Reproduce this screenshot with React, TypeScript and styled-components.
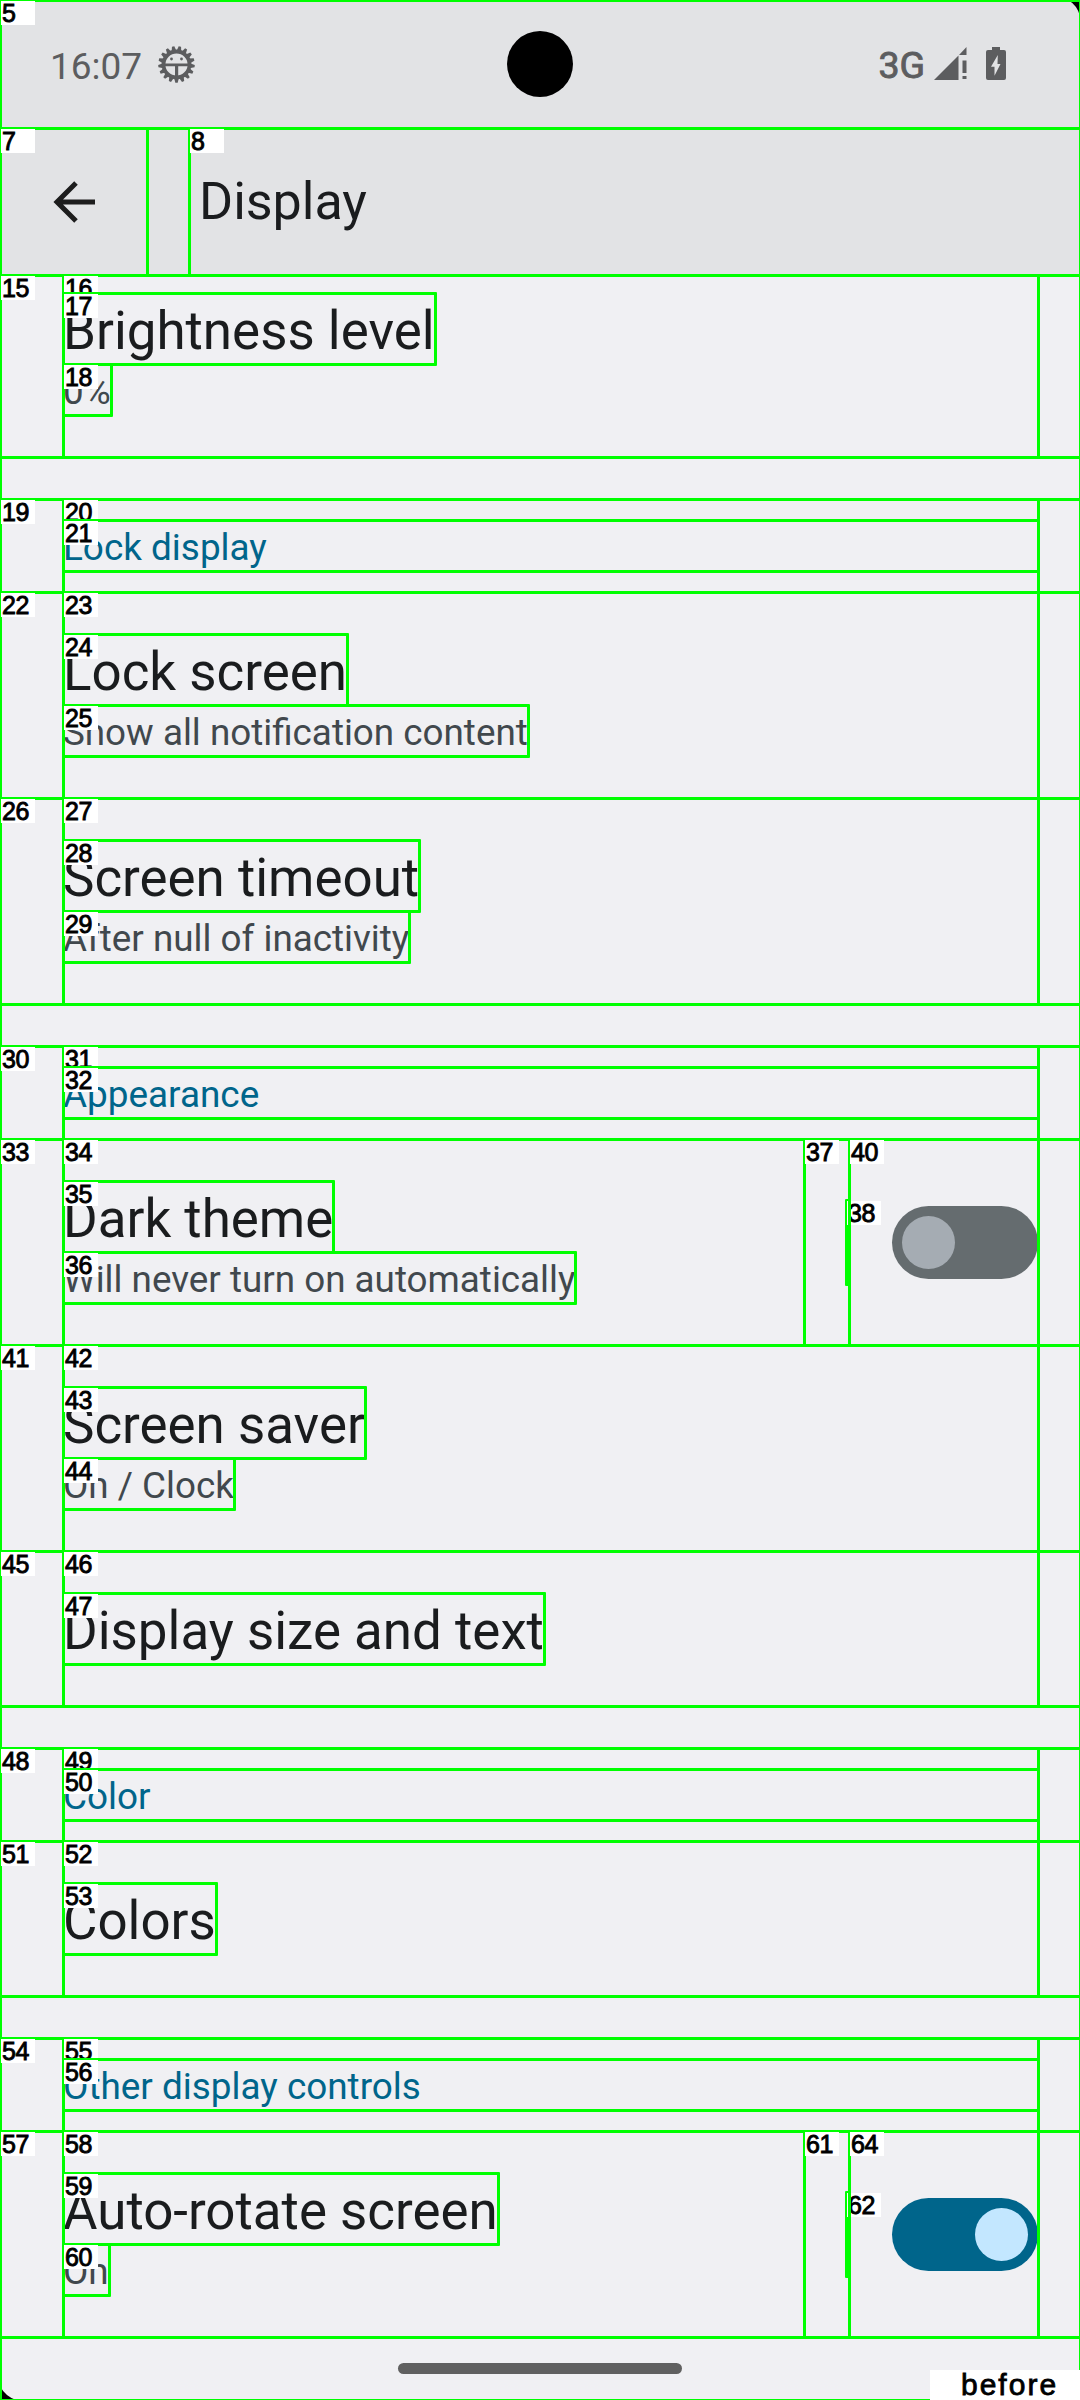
import React from "react";
import styled, { createGlobalStyle } from "styled-components";

const GlobalStyle = createGlobalStyle`
  *, *::before, *::after { box-sizing: border-box; }
  html, body { margin: 0; padding: 0; background: #000; }
  body { font-family: Roboto, "Noto Sans", sans-serif; }
`;

const Screen = styled.div`
  position: relative;
  display: flex;
  flex-direction: column;
  width: 1080px;
  height: 2400px;
  overflow: hidden;
  background: #f0f0f3;
`;

/* Inspector frame: a 3px stroke centred on the edge of the element it marks. */
const Frame = styled.div`
  position: absolute;
  top: -1px;
  left: -1px;
  right: -2px;
  bottom: -2px;
  border: 3px solid #00ff00;
  border-radius: 1px;
  pointer-events: none;
`;

const Tag = styled.span`
  position: absolute;
  top: 1px;
  left: 1px;
  width: 34px;
  height: 24px;
  padding-left: 1px;
  background: #fff;
  color: #000;
  font: 400 25px/25px "Liberation Sans", Arial, sans-serif;
  letter-spacing: -0.4px;
  text-align: left;
  -webkit-text-stroke: 0.9px #000;
`;

function Mark({ id }: { id?: number }) {
  return (
    <>
      <Frame />
      {id !== undefined && <Tag>{id}</Tag>}
    </>
  );
}

const StatusBar = styled.header`
  flex: none;
  display: flex;
  align-items: center;
  justify-content: space-between;
  height: 128px;
  padding: 0 74px 0 50px;
  background: #e2e3e5;
  color: #5c5d5f;
`;

const StatusSide = styled.div`
  display: flex;
  align-items: center;
`;

const Clock = styled.span`
  font-size: 37px;
  line-height: 44px;
  margin-right: 16px;
  padding-top: 5px;
`;

const Network = styled.span`
  font-size: 37.5px;
  font-weight: 400;
  line-height: 44px;
  margin-right: 9px;
  padding-top: 2px;
  -webkit-text-stroke: 0.9px #5c5d5f;
`;

const Camera = styled.div`
  position: absolute;
  left: 507px;
  top: 31px;
  width: 66px;
  height: 66px;
  border-radius: 50%;
  background: #000;
`;

const AppBar = styled.div`
  position: relative;
  flex: none;
  display: flex;
  gap: 42px;
  height: 147px;
  background: #e2e3e5;
`;

const BackButton = styled.button`
  position: relative;
  display: flex;
  align-items: center;
  width: 147px;
  padding: 0 0 0 52px;
  border: 0;
  background: none;
`;

const Heading = styled.h1`
  position: relative;
  flex: 1;
  margin: 0;
  padding-left: 10px;
  font-size: 52px;
  font-weight: 400;
  line-height: 147px;
  color: #1a1c1e;
`;

const List = styled.main`
  position: relative;
  flex: 1;
`;

const Row = styled.section<{ $gap?: boolean }>`
  position: relative;
  display: flex;
  padding-left: 63px;
  padding-right: 42px;
  margin-top: ${(p) => (p.$gap ? "42px" : "0")};
`;

const Category = styled.div`
  position: relative;
  flex: 1;
  padding: 21px 0;
`;

const CategoryTitle = styled.h2`
  position: relative;
  margin: 0;
  height: 51px;
  font-size: 36.9px;
  font-weight: 400;
  line-height: 55px;
  color: #00658b;
`;

const Body = styled.div<{ $top: number }>`
  position: relative;
  flex: 1;
  display: flex;
  flex-direction: column;
  align-items: flex-start;
  padding: ${(p) => p.$top}px 0 42px;
`;

const Title = styled.div`
  position: relative;
  height: 71px;
  font-size: 52.9px;
  line-height: 76px;
  white-space: nowrap;
  color: #1a1c1e;
`;

const Summary = styled.div`
  position: relative;
  height: 51px;
  font-size: 36.8px;
  line-height: 55px;
  white-space: nowrap;
  color: #41484d;
`;

const DividerSlot = styled.div`
  position: relative;
  display: flex;
  align-items: center;
  justify-content: flex-end;
  width: 45px;
`;

const Divider = styled.div`
  position: relative;
  width: 3px;
  height: 84px;
`;

const SwitchSlot = styled.div`
  position: relative;
  display: flex;
  align-items: center;
  justify-content: flex-end;
  width: 189px;
`;

const Track = styled.div<{ $on: boolean }>`
  display: flex;
  align-items: center;
  justify-content: ${(p) => (p.$on ? "flex-end" : "flex-start")};
  width: 146px;
  height: 73px;
  padding: 0 10px;
  border-radius: 37px;
  background: ${(p) => (p.$on ? "#00658b" : "#656c6f")};
`;

const Thumb = styled.div<{ $on: boolean }>`
  width: 53px;
  height: 53px;
  border-radius: 50%;
  background: ${(p) => (p.$on ? "#c3e7ff" : "#a5acb3")};
`;

const NavHandle = styled.div`
  position: absolute;
  left: 398px;
  top: 2363px;
  width: 284px;
  height: 11px;
  border-radius: 6px;
  background: #606060;
`;

const Corner = styled.svg<{ $place: "tr" | "bl" }>`
  position: absolute;
  ${(p) => (p.$place === "tr" ? "top: 0; right: 0;" : "bottom: 0; left: 0; transform: rotate(180deg);")}
`;

const Caption = styled.div`
  position: absolute;
  right: 0;
  bottom: 0;
  width: 150px;
  height: 30px;
  padding-left: 31px;
  background: #fff;
  color: #000;
  font: 400 30px/30px "Liberation Sans", Arial, sans-serif;
  letter-spacing: 2px;
  -webkit-text-stroke: 0.8px #000;
`;

const BugGlyph = styled.svg`
  margin-top: 1px;
`;

function BugIcon() {
  const teeth = Array.from({ length: 17 }, (_, i) => {
    const a = (i / 17) * Math.PI * 2 + Math.PI / 2;
    const w = 0.13;
    const pt = (r: number, t: number) =>
      `${(18.5 + r * Math.cos(t)).toFixed(2)},${(18.5 + r * Math.sin(t)).toFixed(2)}`;
    return `${pt(13.5, a - w * 1.4)} ${pt(18.3, a - w * 0.5)} ${pt(18.3, a + w * 0.5)} ${pt(13.5, a + w * 1.4)}`;
  });
  return (
    <BugGlyph width="37" height="37" viewBox="0 0 37 37" fill="#5c5d5f">
      {teeth.map((t) => (
        <polygon key={t} points={t} />
      ))}
      <circle cx="18.5" cy="18.5" r="13" fill="none" stroke="#5c5d5f" strokeWidth="3.8" />
      <circle cx="13.5" cy="13" r="1.4" />
      <circle cx="23.5" cy="13" r="1.4" />
      <path d="M6 17.500h25v2.800H6zM17 18h3.200v13H17z" />
    </BugGlyph>
  );
}

function SignalIcon() {
  return (
    <svg width="33" height="34" viewBox="0 0 33 34" fill="#5c5d5f">
      <path d="M0 33L24.500 8.500V33zM25 8L32.500 0V8zM28.500 13.500h4v12.500h-4zM28.500 29h4v3h-4z" />
    </svg>
  );
}

function BatteryIcon() {
  return (
    <svg width="20" height="34" viewBox="0 0 20 34">
      <path
        fill="#5c5d5f"
        d="M6 0h8v3h4a2 2 0 0 1 2 2v26a2 2 0 0 1-2 2H2a2 2 0 0 1-2-2V5a2 2 0 0 1 2-2h4z"
      />
      <path fill="#e2e3e5" d="M11.800 8L5 19.800h3.500v9L14.500 17h-3z" />
    </svg>
  );
}

const StatusIcons = styled.div`
  display: flex;
  gap: 19px;
`;

function BackIcon() {
  return (
    <svg width="44" height="42" viewBox="0 0 44 42" fill="none" stroke="#1d1d1d" strokeWidth="5">
      <path d="M43 21H5M24 2L5 21l19 19" />
    </svg>
  );
}

interface ItemProps {
  ids: number[];
  title: string;
  summary?: string;
  top?: number;
  toggle?: { on: boolean; ids: number[] };
}

function Item({ ids, title, summary, top = 42, toggle }: ItemProps) {
  return (
    <Row>
      <Mark id={ids[0]} />
      <Body $top={top}>
        <Mark id={ids[1]} />
        <Title>
          {title}
          <Mark id={ids[2]} />
        </Title>
        {summary && (
          <Summary>
            {summary}
            <Mark id={ids[3]} />
          </Summary>
        )}
      </Body>
      {toggle && (
        <>
          <DividerSlot>
            <Mark id={toggle.ids[0]} />
            <Divider>
              <Mark id={toggle.ids[1]} />
            </Divider>
          </DividerSlot>
          <SwitchSlot>
            <Track $on={toggle.on}>
              <Thumb $on={toggle.on} />
            </Track>
            <Mark id={toggle.ids[2]} />
          </SwitchSlot>
        </>
      )}
    </Row>
  );
}

function Section({ ids, title }: { ids: number[]; title: string }) {
  return (
    <Row $gap>
      <Mark id={ids[0]} />
      <Category>
        <Mark id={ids[1]} />
        <CategoryTitle>
          {title}
          <Mark id={ids[2]} />
        </CategoryTitle>
      </Category>
    </Row>
  );
}

export default function App() {
  return (
    <>
      <GlobalStyle />
      <Screen>
        <StatusBar>
          <StatusSide>
            <Clock>16:07</Clock>
            <BugIcon />
          </StatusSide>
          <StatusSide>
            <Network>3G</Network>
            <StatusIcons>
              <SignalIcon />
              <BatteryIcon />
            </StatusIcons>
          </StatusSide>
        </StatusBar>
        <Camera />
        <Corner $place="tr" width="12" height="16" viewBox="0 0 12 16">
          <path d="M0 0Q9 5 12 16V0z" />
        </Corner>
        <Corner $place="bl" width="16" height="14" viewBox="0 0 16 14">
          <path d="M0 0Q11 4 16 14V0z" />
        </Corner>
        <Mark id={5} />
        <AppBar>
          <Mark />
          <BackButton aria-label="Back">
            <BackIcon />
            <Mark id={7} />
          </BackButton>
          <Heading>
            Display
            <Mark id={8} />
          </Heading>
        </AppBar>
        <List>
          <Mark />
          <Item ids={[15, 16, 17, 18]} title="Brightness level" summary="0%" top={18} />
          <Section ids={[19, 20, 21]} title="Lock display" />
          <Item ids={[22, 23, 24, 25]} title="Lock screen" summary="Show all notification content" />
          <Item ids={[26, 27, 28, 29]} title="Screen timeout" summary="After null of inactivity" />
          <Section ids={[30, 31, 32]} title="Appearance" />
          <Item
            ids={[33, 34, 35, 36]}
            title="Dark theme"
            summary="Will never turn on automatically"
            toggle={{ on: false, ids: [37, 38, 40] }}
          />
          <Item ids={[41, 42, 43, 44]} title="Screen saver" summary="On / Clock" />
          <Item ids={[45, 46, 47]} title="Display size and text" />
          <Section ids={[48, 49, 50]} title="Color" />
          <Item ids={[51, 52, 53]} title="Colors" />
          <Section ids={[54, 55, 56]} title="Other display controls" />
          <Item
            ids={[57, 58, 59, 60]}
            title="Auto-rotate screen"
            summary="On"
            toggle={{ on: true, ids: [61, 62, 64] }}
          />
        </List>
        <NavHandle />
        <Caption>before</Caption>
      </Screen>
    </>
  );
}
